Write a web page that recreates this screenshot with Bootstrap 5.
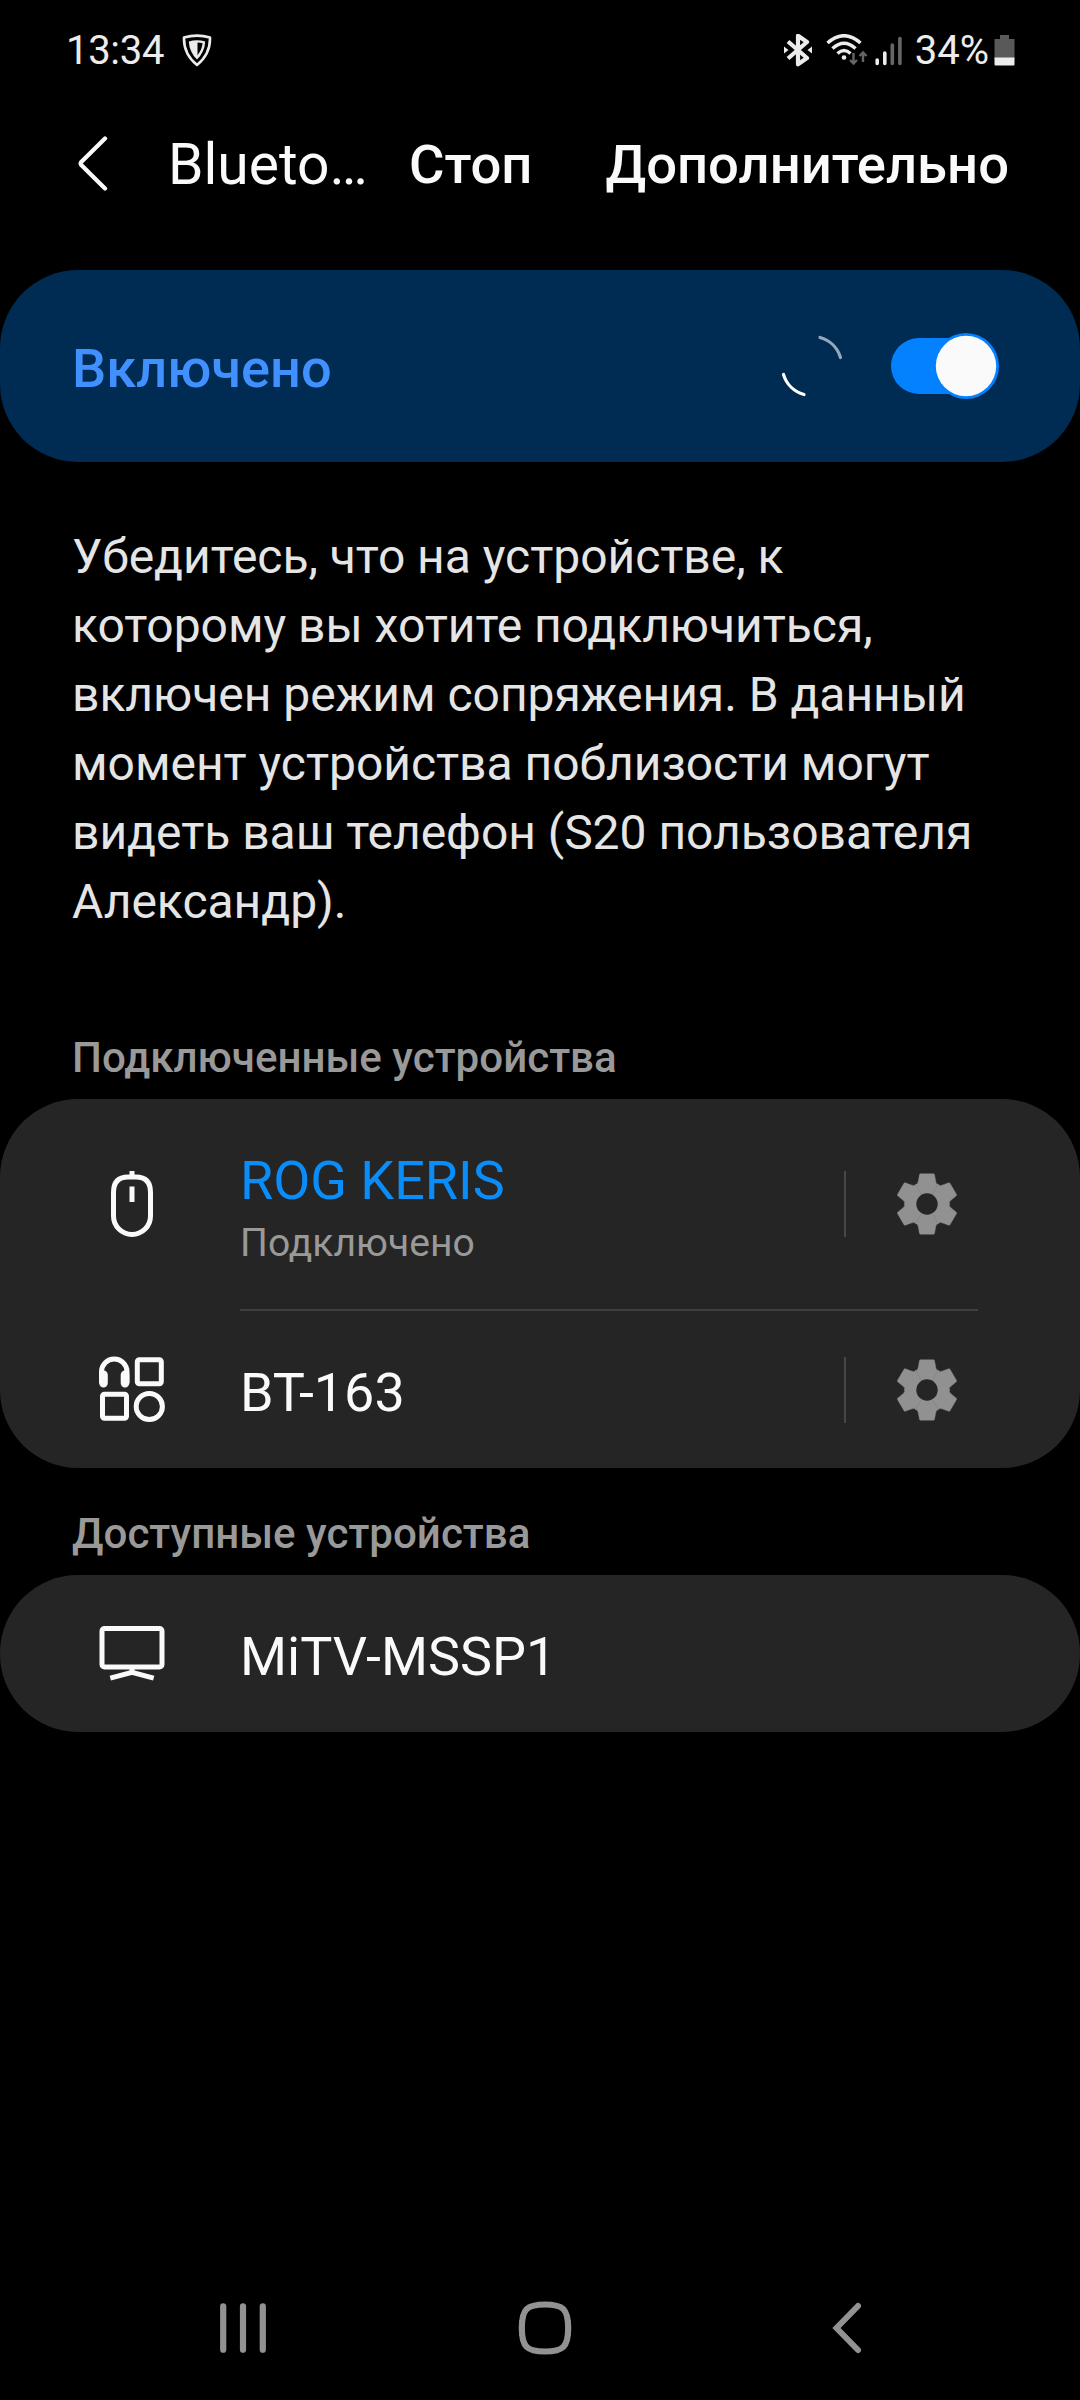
<!DOCTYPE html>
<html lang="ru" data-bs-theme="dark">
<head>
<meta charset="utf-8">
<meta name="viewport" content="width=device-width, initial-scale=1">
<title>Bluetooth</title>
<link href="https://cdn.jsdelivr.net/npm/bootstrap@5.3.0/dist/css/bootstrap.min.css" rel="stylesheet">
<style>
  body { background: #000; color: #fafafa; font-family: Roboto, "Noto Sans", sans-serif; min-height: 2400px; }
  svg { display: block; flex: none; }
  .status-bar { height: 102px; padding: 0 65px 0 66px; font-size: 40px; line-height: 46px; color: #ececec; }
  .clock { letter-spacing: -.3px; }
  .shield { margin-left: 18px; }
  .signals { margin-right: 11px; }
  .battery { margin-left: 5px; }
  .app-bar { height: 125px; padding: 0 71px 0 77px; font-size: 54.4px; line-height: 64px; }
  .app-title { font-size: 57px; width: 202px; margin-left: 59px; }
  .app-action { font-weight: 500; }
  .app-more { margin-left: 73px; }
  .panel { border-radius: 78px; background: #252525; }
  .panel-on { height: 192px; margin-top: 43px; padding: 0 81px 0 72px; background: #002b52; }
  .panel-on .state { font-size: 54.2px; line-height: 64px; font-weight: 500; color: #4190ff; padding-top: 5px; }
  .toggle { width: 108px; height: 66px; margin-left: 47px; }
  .hint { margin: 60px 72px 0; font-size: 48px; line-height: 69px; letter-spacing: -.03px; color: #e5e5e5; }
  .caption-row { font-size: 42.1px; line-height: 50px; font-weight: 500; color: #999; padding-left: 72px; margin-bottom: 16px; }
  .caption-connected { margin-top: 97px; }
  .caption-available { margin-top: 41px; }
  .device { padding: 0 102px 0 96px; }
  .device-lg { height: 210px; }
  .device-sm { height: 157px; }
  .device-icon { width: 72px; margin-right: 72px; }
  .device-name { font-size: 53.9px; line-height: 64px; }
  .device-lg .device-name { padding-top: 6px; color: #0a8cf9; }
  .device-sm .device-name { padding-top: 6px; }
  .device-state { font-size: 39.1px; line-height: 46px; color: #999; margin-top: 7px; }
  .split { width: 2px; height: 66px; background: #474747; margin-right: 50px; }
  .gear { margin-right: 20px; }
  .rule { height: 2px; background: #3f3f3f; margin: 0 102px 0 240px; }
  .nav-keys { height: 144px; padding: 0 206px 0 216px; }
</style>
</head>
<body class="d-flex flex-column m-0">

<svg width="0" height="0" class="position-absolute" aria-hidden="true">
  <defs>
    <path id="tooth" d="M0 0L-11.4 -19.7Q-9.4 -19.2 -8.8 -22.5L-7.5 -29.5Q-7.3 -30.3 -6.6 -30.3H6.6Q7.3 -30.3 7.5 -29.5L8.8 -22.5Q9.4 -19.2 11.4 -19.7Z"/>
    <symbol id="gear" viewBox="-31 -31 62 62">
      <g fill="#919191" stroke="#919191" stroke-width=".4">
        <use href="#tooth"/><use href="#tooth" transform="rotate(60)"/><use href="#tooth" transform="rotate(120)"/>
        <use href="#tooth" transform="rotate(180)"/><use href="#tooth" transform="rotate(240)"/><use href="#tooth" transform="rotate(300)"/>
      </g>
      <circle r="10.7" fill="#252525"/>
    </symbol>
  </defs>
</svg>

<div class="status-bar d-flex align-items-center justify-content-between">
  <div class="d-flex align-items-center">
    <span class="clock">13:34</span>
    <svg class="shield" width="30" height="34" viewBox="0 0 30 34">
      <path d="M2 3.6Q15 -.4 28 3.6Q28.5 20 15 31Q1.5 20 2 3.6Z" fill="none" stroke="#ececec" stroke-width="2.6" stroke-linejoin="round"/>
      <path d="M6.8 7.4Q15 5 23.2 7.4Q22.6 18 15 25.6Q7.4 18 6.8 7.4Z" fill="#ececec"/>
      <path d="M15.5 8.6Q18.5 8.6 20.6 9.3Q19.8 16 15.5 21.2Z" fill="#000"/>
    </svg>
  </div>
  <div class="d-flex align-items-center">
    <svg class="signals" width="120" height="34" viewBox="784 33 120 34" fill="none">
      <path d="M788 40.500L807 57L798 63.300V34.700L807 41L788 57.500" stroke="#ececec" stroke-width="4.200" stroke-linejoin="round"/>
      <path d="M784 45.500L788.500 49L784 52.500ZM812 45.500L807.500 49L812 52.500Z" fill="#ececec"/>
      <g stroke="#ececec" stroke-width="3.500">
        <path d="M827.500 42Q844 27.500 860.500 42"/><path d="M832.500 47.500Q844 37 855.500 47.500"/><path d="M837.500 52.500Q844 46.500 850.500 52.500"/>
      </g>
      <circle cx="844" cy="56.500" r="2.300" fill="#ececec"/>
      <path d="M853.500 52V62M850 59L853.500 62.500L857 59M863 61V52M859.500 55L863 51.500L866.500 55" stroke="#666" stroke-width="2.400"/>
      <g stroke-width="3.600" stroke-linecap="round">
        <path d="M877.200 59V62.500M884.800 52V62.500" stroke="#ececec"/><path d="M892.300 44V62.500M899.900 37.500V62.500" stroke="#666"/>
      </g>
    </svg>
    <span>34%</span>
    <svg class="battery" width="21" height="34" viewBox="0 0 21 34">
      <path d="M6 1H15V5H20.500V25H.5V5H6Z" fill="#595959"/><path d="M.5 23.500H20.500V30.500Q20.500 31.500 19.500 31.500H1.500Q.5 31.500 .5 30.500Z" fill="#ececec"/>
    </svg>
  </div>
</div>

<header class="app-bar d-flex align-items-center">
  <svg width="32" height="58" viewBox="77 134.500 32 58"><path d="M105 137L81.300 160.500Q80 162 81.300 163.500L105 187" fill="none" stroke="#fafafa" stroke-width="4.200" stroke-linecap="round"/></svg>
  <div class="app-title text-nowrap">Blueto…</div>
  <div class="app-action ms-auto">Стоп</div>
  <div class="app-action app-more">Дополнительно</div>
</header>

<section class="panel panel-on d-flex align-items-center">
  <div class="state me-auto">Включено</div>
  <svg width="64" height="64" viewBox="-32 -32 64 64" fill="none" stroke-width="3.200" stroke-linecap="round">
    <path d="M8 -28.500A29.600 29.600 0 0 1 28.500 -8.500" stroke="#96a9bb"/><path d="M-8 28.500A29.600 29.600 0 0 1 -28.500 8.500" stroke="#fff"/>
  </svg>
  <svg class="toggle" viewBox="0 0 108 66"><rect y="5" width="106" height="56" rx="28" fill="#0381fe"/><circle cx="75" cy="33" r="33" fill="#0381fe"/><circle cx="75" cy="33" r="30.200" fill="#fafafa"/></svg>
</section>

<p class="hint">Убедитесь, что на устройстве, к<br>которому вы хотите подключиться,<br>включен режим сопряжения. В данный<br>момент устройства поблизости могут<br>видеть ваш телефон (S20 пользователя<br>Александр).</p>

<div class="caption-row caption-connected">Подключенные устройства</div>
<section class="panel">
  <div class="device device-lg d-flex align-items-center">
    <div class="device-icon d-flex justify-content-center">
      <svg width="72" height="72" viewBox="0 0 72 72" fill="none" stroke="#fafafa" stroke-width="5">
        <path d="M17.500 24.500Q17.500 9 32 9H40Q54.500 9 54.500 24.500V48A18.500 18.500 0 0 1 17.500 48ZM36 3V8M36 18.500V34"/>
      </svg>
    </div>
    <div class="me-auto">
      <div class="device-name">ROG KERIS</div>
      <div class="device-state">Подключено</div>
    </div>
    <div class="split"></div>
    <svg class="gear" width="62" height="62"><use href="#gear"/></svg>
  </div>
  <div class="rule"></div>
  <div class="device device-sm d-flex align-items-center">
    <div class="device-icon">
      <svg width="72" height="72" viewBox="0 .7 72 72" fill="none" stroke="#fafafa" stroke-width="5">
        <path d="M5.500 30V18.500A12.700 12.700 0 0 1 31 18.500V30"/>
        <path d="M7.500 21.500V29.800M29 21.500V29.800" stroke-width="8.600" stroke-linecap="round"/>
        <rect x="41.300" y="6.500" width="24" height="24" rx="2"/><rect x="6.500" y="41" width="24" height="24" rx="2"/><circle cx="53.300" cy="53.200" r="13.100"/>
      </svg>
    </div>
    <div class="device-name me-auto">BT-163</div>
    <div class="split"></div>
    <svg class="gear" width="62" height="62"><use href="#gear"/></svg>
  </div>
</section>

<div class="caption-row caption-available">Доступные устройства</div>
<section class="panel">
  <div class="device device-sm d-flex align-items-center">
    <div class="device-icon">
      <svg width="72" height="72" viewBox="0 0 72 72" fill="none" stroke="#fafafa" stroke-width="5">
        <rect x="6" y="10.500" width="60" height="38.500" rx="2.500"/><path d="M36 49V55M14.300 60.200L36 54.300L57.700 60.200"/>
      </svg>
    </div>
    <div class="device-name">MiTV-MSSP1</div>
  </div>
</section>

<nav class="nav-keys mt-auto d-flex align-items-center justify-content-between">
  <svg width="54" height="54" viewBox="0 0 54 54" stroke="#929292" stroke-width="6.200" stroke-linecap="round"><path d="M7.200 5.300V48.700M27 5.300V48.700M46.800 5.300V48.700"/></svg>
  <svg width="54" height="54" viewBox="0 0 54 54"><path d="M27 3.500C45 3.500 50.200 8 50.200 27S45 50.500 27 50.500S3.800 46 3.800 27S9 3.500 27 3.500Z" fill="none" stroke="#929292" stroke-width="6.200"/></svg>
  <svg width="54" height="54" viewBox="0 0 54 54"><path d="M38 5L16.500 27L38 49" fill="none" stroke="#929292" stroke-width="6" stroke-linecap="round"/></svg>
</nav>

<script src="https://cdn.jsdelivr.net/npm/bootstrap@5.3.0/dist/js/bootstrap.bundle.min.js"></script>
</body>
</html>
